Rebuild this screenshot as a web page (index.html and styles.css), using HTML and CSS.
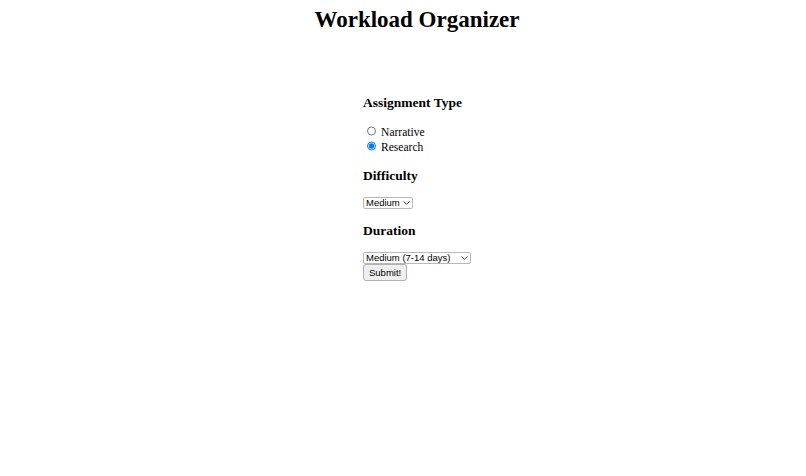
FILE: index.html
```html
<!DOCTYPE html>
<html lang="en">
<head>
<meta charset="utf-8">
<title>Workload Organizer</title>
<link rel="stylesheet" href="styles.css">
</head>
<body>
<h1 class="title">Workload Organizer</h1>
<div class="page">
  <form class="form">
    <h3 class="section-title">Assignment Type</h3>
    <div class="choice"><input class="radio" type="radio" name="type" id="narrative" value="narrative"> <label for="narrative">Narrative</label></div>
    <div class="choice"><input class="radio" type="radio" name="type" id="research" value="research" checked> <label for="research">Research</label></div>
    <h3 class="section-title">Difficulty</h3>
    <span class="select-wrap">
      <select class="select select-short" name="difficulty">
        <option>Easy</option>
        <option selected>Medium</option>
        <option>Hard</option>
      </select>
      <svg class="chevron" width="7" height="4" viewBox="0 0 7 4" aria-hidden="true"><path d="M0.5 0.5 L3.5 3.3 L6.5 0.5" fill="none" stroke="#333" stroke-width="0.9"/></svg>
    </span>
    <h3 class="section-title">Duration</h3>
    <span class="select-wrap">
      <select class="select select-long" name="duration">
        <option>Short (1-6 days)</option>
        <option selected>Medium (7-14 days)</option>
        <option>Long (15+ days)</option>
      </select>
      <svg class="chevron" width="7" height="4" viewBox="0 0 7 4" aria-hidden="true"><path d="M0.5 0.5 L3.5 3.3 L6.5 0.5" fill="none" stroke="#333" stroke-width="0.9"/></svg>
    </span>
    <div class="actions"><button class="button" type="submit">Submit!</button></div>
  </form>
</div>
</body>
</html>
```

FILE: styles.css
```css
html, body {
  background: #ffffff;
}

body {
  margin: 0;
  padding: 7px 0 0 28px;
  font-family: "Liberation Serif", "Times New Roman", serif;
  font-size: 11.52px;
  color: #000000;
}

.title {
  margin: 0;
  font-size: 23px;
  font-weight: bold;
  text-align: center;
}

.page {
  padding-top: 48px;
  text-align: center;
}

.form {
  display: inline-block;
  text-align: left;
}

.section-title {
  margin: 13.5px 0;
  font-size: 13.5px;
  font-weight: bold;
}

.choice {
  line-height: 14.6px;
}

.radio {
  width: 9.4px;
  height: 9.4px;
  margin: 2.2px 2.2px 0 3.6px;
  vertical-align: baseline;
}

.select-wrap {
  position: relative;
  display: inline-block;
  vertical-align: top;
  height: 12px;
}

.select {
  display: block;
  box-sizing: border-box;
  height: 12px;
  margin: 0;
  padding: 0 0 0 2px;
  border: 1px solid #b8b8b8;
  border-radius: 2px;
  background: #ffffff;
  -webkit-appearance: none;
  appearance: none;
  font-family: "Liberation Sans", Arial, sans-serif;
  font-size: 9.5px;
  line-height: 10px;
  color: #000000;
  outline: none;
}

.select-short {
  width: 50px;
}

.select-long {
  width: 108px;
}

.chevron {
  position: absolute;
  right: 3px;
  top: 4px;
  pointer-events: none;
}

.actions {
  line-height: 0;
}

.button {
  box-sizing: border-box;
  height: 17px;
  margin: 0;
  padding: 0 5px;
  border: 1px solid #b0b0b0;
  border-radius: 3px;
  background: #efefef;
  -webkit-appearance: none;
  appearance: none;
  font-family: "Liberation Sans", Arial, sans-serif;
  font-size: 9.5px;
  line-height: 13px;
  color: #000000;
}
```
